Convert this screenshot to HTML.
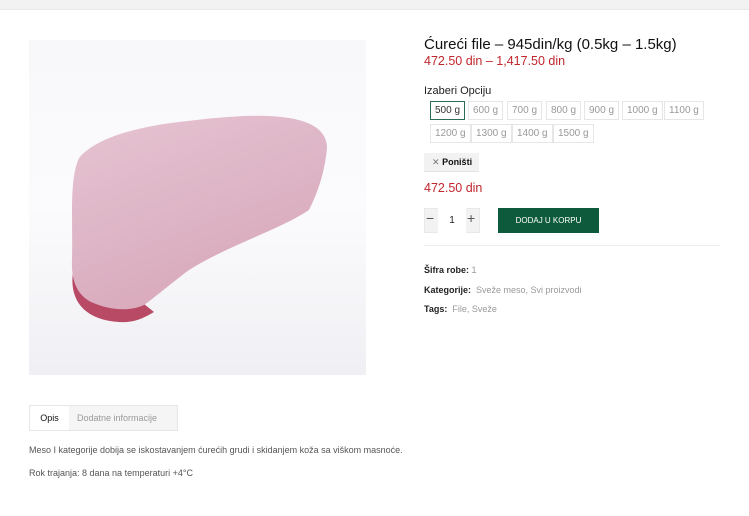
<!DOCTYPE html>
<html><head><meta charset="utf-8"><style>
*{margin:0;padding:0;box-sizing:border-box}
body{width:749px;height:516px;background:#fff;font-family:"Liberation Sans",sans-serif;color:#222;position:relative;overflow:hidden}
.a{position:absolute}
.top{left:0;top:0;width:749px;height:10px;background:#f2f2f2;border-bottom:1px solid #e8e8e8}
.sw{position:absolute;height:19px;border:1px solid #e6e6e6;font-size:10px;color:#999;line-height:17px;padding:0 4px;white-space:nowrap}
.meta{font-size:9px;color:#999}
.meta b{color:#222}
</style></head><body>
<div class="a top"></div>
<div class="a" style="left:29px;top:40px;width:337px;height:335px;background:linear-gradient(180deg,#f8f8fa,#fbfbfd 50%,#f0eff3)">
<svg width="337" height="335" viewBox="0 0 337 335">
<defs><linearGradient id="m" x1="0" y1="0" x2="0.5" y2="1"><stop offset="0" stop-color="#e6c4d2"/><stop offset="0.6" stop-color="#ddb4c5"/><stop offset="1" stop-color="#d8a8b9"/></linearGradient></defs>
<path d="M44 232 C40 260 55 280 90 282 C105 283 115 278 125 272 L110 260 Z" fill="#b84a66"/>
<path d="M50 118 C65 100 100 88 150 82 C190 77 230 73 260 78 C285 82 298 92 298 108 C296 130 290 150 280 170 C250 190 200 205 160 230 C140 245 125 258 115 265 C100 272 80 270 62 262 C48 255 42 240 43 220 C44 180 40 140 50 118Z" fill="url(#m)"/>
</svg></div>
<div class="a" style="left:424px;top:36px;font-size:15px;color:#111">Ćureći file – 945din/kg (0.5kg – 1.5kg)</div>
<div class="a" style="left:424px;top:54px;font-size:12.5px;color:#c0272d">472.50 din – 1,417.50 din</div>
<div class="a" style="left:424px;top:85px;font-size:11px;color:#222">Izaberi Opciju</div>
<div class="sw" style="left:430px;top:101px;border-color:#2e6b55;color:#333">500 g</div>
<div class="sw" style="left:468px;top:101px">600 g</div>
<div class="sw" style="left:507px;top:101px">700 g</div>
<div class="sw" style="left:546px;top:101px">800 g</div>
<div class="sw" style="left:584px;top:101px">900 g</div>
<div class="sw" style="left:622px;top:101px">1000 g</div>
<div class="sw" style="left:664px;top:101px">1100 g</div>
<div class="sw" style="left:430px;top:124px">1200 g</div>
<div class="sw" style="left:471px;top:124px">1300 g</div>
<div class="sw" style="left:512px;top:124px">1400 g</div>
<div class="sw" style="left:553px;top:124px">1500 g</div>
<div class="a" style="left:424px;top:153px;width:55px;height:19px;background:#f2f2f2;border-bottom:1px solid #e4e4e4;font-size:9px;line-height:19px;padding-left:8px;color:#111"><span style="color:#777">✕</span> <b>Poništi</b></div>
<div class="a" style="left:424px;top:181px;font-size:12.5px;color:#c0272d">472.50 din</div>
<div class="a" style="left:424px;top:208px;width:56px;height:25px;background:#f2f2f2;border:1px solid #e8e8e8"></div>
<div class="a" style="left:438px;top:208px;width:28px;height:25px;background:#fff;font-size:10px;text-align:center;line-height:25px">1</div>
<div class="a" style="left:426px;top:210px;font-size:14px;color:#555">−</div>
<div class="a" style="left:467px;top:210px;font-size:14px;color:#555">+</div>
<div class="a" style="left:498px;top:208px;width:101px;height:25px;background:#0e5a3c;color:#fff;font-size:8px;text-align:center;line-height:25px">DODAJ U KORPU</div>
<div class="a" style="left:424px;top:245px;width:296px;height:1px;background:#eee"></div>
<div class="a meta" style="left:424px;top:265px"><b>Šifra robe:</b> 1</div>
<div class="a meta" style="left:424px;top:285px"><b>Kategorije:</b> &nbsp;Sveže meso, Svi proizvodi</div>
<div class="a meta" style="left:424px;top:304px"><b>Tags:</b> &nbsp;File, Sveže</div>
<div class="a" style="left:29px;top:405px;width:149px;height:26px;border:1px solid #e6e6e6;background:#f5f5f5"></div>
<div class="a" style="left:29px;top:405px;width:40px;height:26px;border:1px solid #e6e6e6;border-right:none;background:#fff;font-size:9px;line-height:24px;text-align:center;color:#111">Opis</div>
<div class="a" style="left:77px;top:405px;font-size:9px;line-height:26px;color:#999">Dodatne informacije</div>
<div class="a" style="left:29px;top:445px;font-size:9px;color:#555">Meso I kategorije dobija se iskostavanjem ćurećih grudi i skidanjem koža sa viškom masnoće.</div>
<div class="a" style="left:29px;top:468px;font-size:9px;color:#555">Rok trajanja: 8 dana na temperaturi +4°C</div>
</body></html>
